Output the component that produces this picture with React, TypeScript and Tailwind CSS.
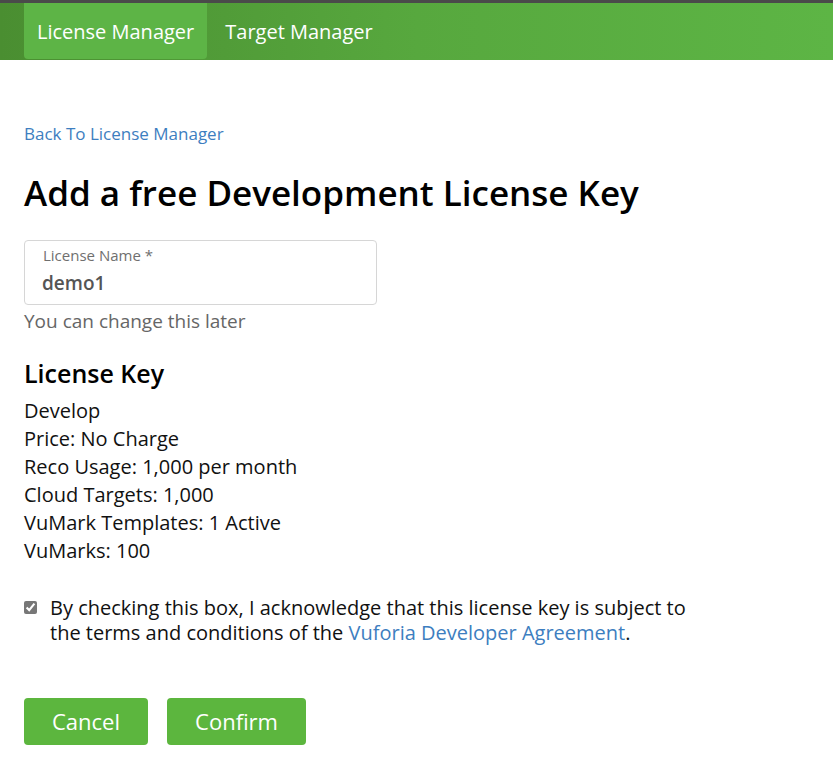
import React from "react";

const features = [
  "Develop",
  "Price: No Charge",
  "Reco Usage: 1,000 per month",
  "Cloud Targets: 1,000",
  "VuMark Templates: 1 Active",
  "VuMarks: 100",
];

export default function App() {
  return (
    <div className="min-h-screen bg-white text-black" style={{ fontFamily: '"Open Sans", "Noto Sans", sans-serif' }}>
      <div className="h-[3px] bg-[#4a4a4a]" />
      <nav className="flex h-[57px] bg-gradient-to-r from-[#4a8e31] via-[#57a83e] to-[#5db545] pl-[24px]">
        <a className="flex h-[56px] items-center rounded-b-[4px] bg-[#5db446] px-[13px] pt-[2px] text-[20px] text-white">
          License Manager
        </a>
        <a className="flex h-[56px] items-center px-[18px] pt-[2px] text-[20px] text-white">Target Manager</a>
      </nav>

      <main className="px-[24px] pt-[63px]">
        <a className="block text-[17px] leading-[22px] text-[#3d7ec0]">Back To License Manager</a>

        <h1 className="mt-[25px] text-[35px] font-semibold leading-[46px]">
          Add a free Development License Key
        </h1>

        <div className="mt-[24px] w-[353px] rounded-[4px] border border-[#d6d6d6] px-[17px] pb-[7px] pt-[4px]">
          <label className="block pl-[1px] text-[15px] leading-[20px] text-[#6f6f6f]">License Name *</label>
          <div className="mt-[4px] text-[19px] font-semibold leading-[28px] text-[#555]">demo1</div>
        </div>
        <p className="mt-[3px] text-[19px] leading-[26px] text-[#666]">You can change this later</p>

        <h2 className="mt-[23px] text-[25px] font-semibold leading-[32px]">License Key</h2>
        <ul className="mt-[8px]">
          {features.map((f) => (
            <li key={f} className="text-[20px] leading-[28px] text-[#111]">
              {f}
            </li>
          ))}
        </ul>

        <label className="mt-[30px] flex items-start gap-[13px]">
          <input type="checkbox" defaultChecked className="mt-[6px] h-[13px] w-[13px] accent-[#777]" />
          <span className="text-[20px] leading-[25px] text-[#111]">
            By checking this box, I acknowledge that this license key is subject to
            <br />
            the terms and conditions of the{" "}
            <a className="text-[#3d7ec0]">Vuforia Developer Agreement</a>.
          </span>
        </label>

        <div className="mt-[53px] flex gap-[19px]">
          <button className="h-[47px] w-[124px] rounded-[4px] bg-[#5cb63e] text-[22px] text-white">Cancel</button>
          <button className="h-[47px] w-[139px] rounded-[4px] bg-[#5cb63e] text-[22px] text-white">Confirm</button>
        </div>
      </main>
    </div>
  );
}
